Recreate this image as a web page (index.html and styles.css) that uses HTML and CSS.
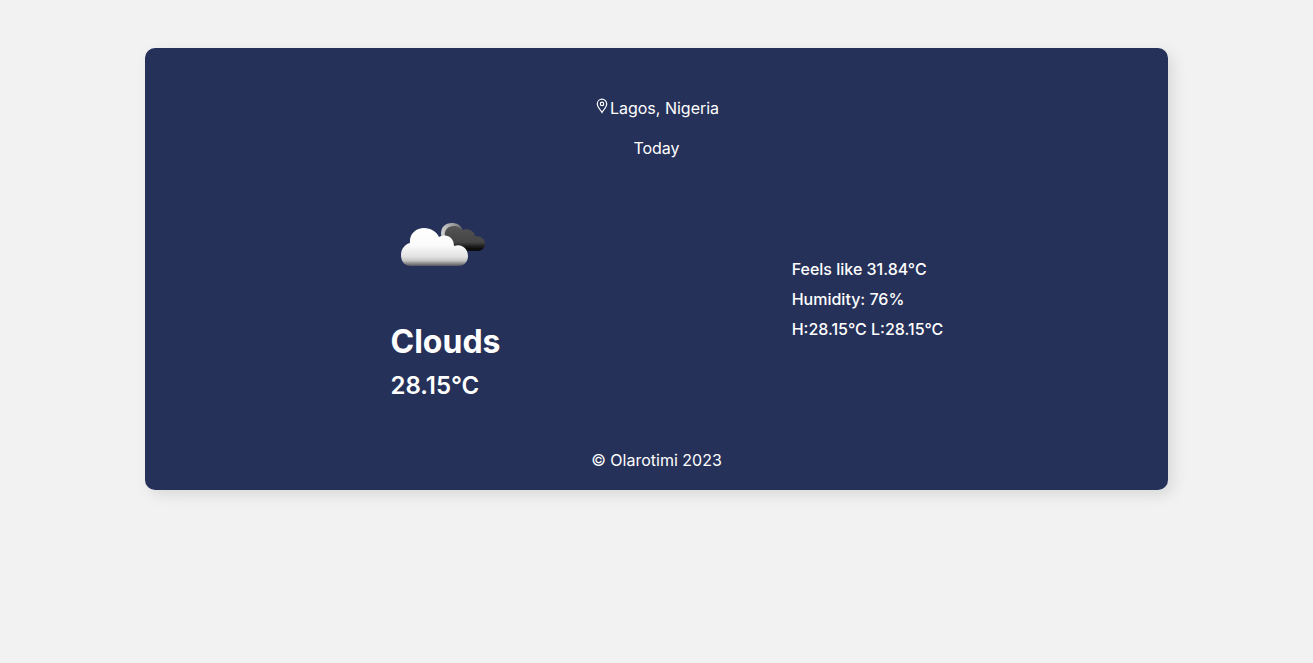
FILE: index.html
```html
<!DOCTYPE html>
<html lang="en">
<head>
<meta charset="utf-8">
<meta name="viewport" content="width=device-width, initial-scale=1">
<title>Weather</title>
<link rel="stylesheet" href="styles.css">
</head>
<body>
<main class="card">
  <header class="header">
    <p class="location">
      <svg class="pin" viewBox="-2 0 14 16" aria-hidden="true"><path d="M6 14.5C4.4 11.9 1.3 8.6 1.3 5.9a4.7 4.7 0 0 1 9.4 0c0 2.7-3.1 6-4.7 8.6Z"/><circle cx="6" cy="5.9" r="1.7"/></svg>
      <span>Lagos, Nigeria</span>
    </p>
    <p>Today</p>
  </header>
  <section class="weather">
    <div class="summary">
      <svg class="clouds" viewBox="0 0 100 100" role="img" aria-label="Clouds">
        <defs>
          <linearGradient id="white" x1="0" y1="0" x2="0" y2="1">
            <stop offset="0" stop-color="#fff"/>
            <stop offset=".45" stop-color="#fbfbfb"/>
            <stop offset=".75" stop-color="#e2e2e2"/>
            <stop offset=".86" stop-color="#c4c4c4"/>
            <stop offset=".93" stop-color="#8c8c8e"/>
            <stop offset="1" stop-color="#55555c"/>
          </linearGradient>
          <linearGradient id="dark" x1="0" y1="0" x2="0" y2="1">
            <stop offset="0" stop-color="#555"/>
            <stop offset=".65" stop-color="#444"/>
            <stop offset=".88" stop-color="#101010"/>
            <stop offset="1" stop-color="#060606"/>
          </linearGradient>
          <linearGradient id="rim" x1="0" y1="0" x2="1" y2="0">
            <stop offset="0" stop-color="#d2d2d2"/>
            <stop offset="1" stop-color="#777"/>
          </linearGradient>
          <filter id="soft"><feGaussianBlur stdDeviation=".7"/></filter>
        </defs>
        <g filter="url(#soft)">
          <path fill="url(#rim)" d="M50 39C50 32 54 28 61 28C66 28 69 30 71 34L68 45H51Z"/>
          <path fill="url(#dark)" d="M54 41C53 35 57 31 63 31C67 31 70 33 71 35C76 33 83 35 84 41C90 41 94 44 94 48C94 53 91 56 86 56H55Z"/>
          <path fill="url(#white)" d="M20 71C14 71 10 67 10 60C10 54 14 49 19 48C18 39 25 33 33 33C40 33 46 37 48 42C55 38 63 42 63 51C71 48 77 54 77 61C77 67 73 71 67 71Z"/>
        </g>
      </svg>
      <h1 class="condition">Clouds</h1>
      <p class="temperature">28.15°C</p>
    </div>
    <div class="details">
      <p>Feels like 31.84°C</p>
      <p>Humidity: 76%</p>
      <p>H:28.15°C L:28.15°C</p>
    </div>
  </section>
  <footer>© Olarotimi 2023</footer>
</main>
</body>
</html>
```
FILE: styles.css
```css
* { box-sizing: border-box; }
body {
  margin: 0;
  padding: 48px 16px;
  background: #f2f2f2;
  color: #fff;
  font: 16px/20px Inter, "Liberation Sans", sans-serif;
}
h1, p { margin: 0; }
.card {
  display: flex;
  flex-direction: column;
  max-width: 1023px;
  margin: 0 auto;
  padding: 50px 20px 20px;
  border-radius: 10px;
  background: #263159;
  box-shadow: 5px 5px 15px rgba(0, 0, 0, 0.1);
  text-align: center;
}
.header {
  display: flex;
  flex-direction: column;
  gap: 20px;
}
.location {
  display: flex;
  justify-content: center;
  gap: 2px;
}
.pin {
  width: 14px;
  height: 16px;
  fill: none;
  stroke: #fff;
  stroke-width: 1.2;
}
.weather {
  display: grid;
  grid-template-columns: 1fr 1fr;
  align-items: center;
  justify-items: center;
  width: 100%;
  max-width: 844px;
  margin: 0 auto;
  padding: 37px 0 49px;
  text-align: left;
}
.clouds {
  display: block;
  width: 100px;
  height: 100px;
}
.condition {
  margin-top: 26px;
  font-size: 32px;
  line-height: 42px;
  font-weight: 700;
}
.temperature {
  margin-top: 8px;
  font-size: 24px;
  line-height: 30px;
  font-weight: 600;
}
.details {
  display: flex;
  flex-direction: column;
  gap: 10px;
  padding-top: 2px;
  font-weight: 500;
}
```
